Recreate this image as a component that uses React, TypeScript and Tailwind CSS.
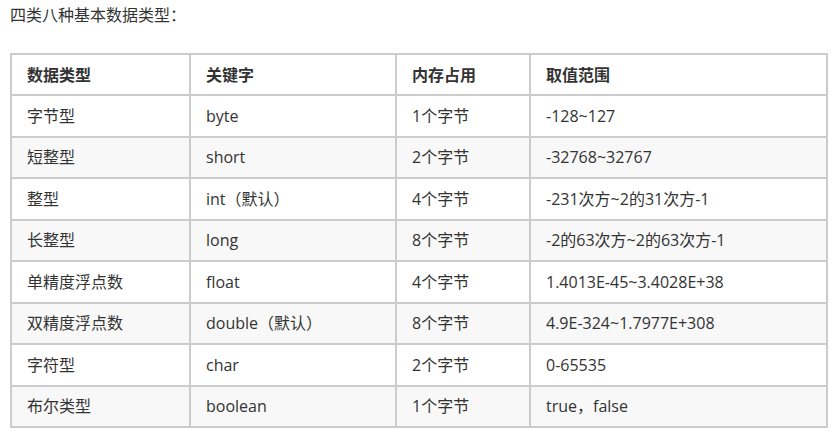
const rows: [string, string, string, string][] = [
  ["字节型", "byte", "1个字节", "-128~127"],
  ["短整型", "short", "2个字节", "-32768~32767"],
  ["整型", "int（默认）", "4个字节", "-231次方~2的31次方-1"],
  ["长整型", "long", "8个字节", "-2的63次方~2的63次方-1"],
  ["单精度浮点数", "float", "4个字节", "1.4013E-45~3.4028E+38"],
  ["双精度浮点数", "double（默认）", "8个字节", "4.9E-324~1.7977E+308"],
  ["字符型", "char", "2个字节", "0-65535"],
  ["布尔类型", "boolean", "1个字节", "true，false"],
];

const font = { fontFamily: '"Open Sans", "Noto Sans CJK SC", sans-serif' };

export default function App() {
  return (
    <div className="bg-white w-[840px] h-[434px] text-[#333] px-[10px] pt-[4px]" style={font}>
      <p className="text-[16px] leading-[22px]">四类八种基本数据类型：</p>
      <table className="mt-[27px] border-collapse w-[818px] table-fixed text-[16px]">
        <colgroup>
          <col className="w-[179px]" />
          <col className="w-[206px]" />
          <col className="w-[134px]" />
          <col />
        </colgroup>
        <thead>
          <tr className="h-[41px]">
            {["数据类型", "关键字", "内存占用", "取值范围"].map((h) => (
              <th key={h} className="border-2 border-[#cccccc] text-left font-bold px-[15px] py-0">
                {h}
              </th>
            ))}
          </tr>
        </thead>
        <tbody>
          {rows.map((r, i) => (
            <tr key={r[0]} className={i % 2 === 1 ? "h-[41.5px] bg-[#f8f8f8]" : "h-[41.5px] bg-white"}>
              {r.map((c, j) => (
                <td key={j} className="border-2 border-[#cccccc] px-[15px] py-0">
                  {c}
                </td>
              ))}
            </tr>
          ))}
        </tbody>
      </table>
    </div>
  );
}
